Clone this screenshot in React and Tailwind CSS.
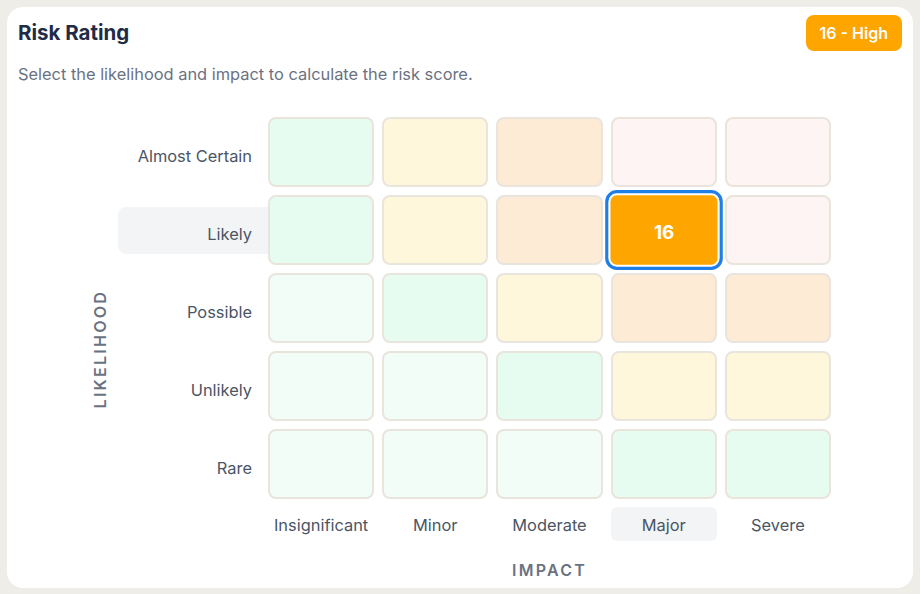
import React, { useState } from 'react';

const likelihoods = ['Almost Certain', 'Likely', 'Possible', 'Unlikely', 'Rare'];
const impacts = ['Insignificant', 'Minor', 'Moderate', 'Major', 'Severe'];

// tonos de la matriz, fila por fila (de arriba hacia abajo)
const tones = {
  mint: 'bg-[#f2fdf8]',
  green: 'bg-[#e6fcf0]',
  yellow: 'bg-[#fff7dc]',
  orange: 'bg-[#fdebd5]',
  pink: 'bg-[#fef4f3]',
};

const matrix = [
  ['green', 'yellow', 'orange', 'pink', 'pink'],
  ['green', 'yellow', 'orange', 'orange', 'pink'],
  ['mint', 'green', 'yellow', 'orange', 'orange'],
  ['mint', 'mint', 'green', 'yellow', 'yellow'],
  ['mint', 'mint', 'mint', 'green', 'green'],
];

const App = () => {
  const [selected, setSelected] = useState({ row: 1, col: 3 });

  const score = (5 - selected.row) * (selected.col + 1);

  return (
    <div className="min-h-screen bg-[#eeede8] p-[7px] font-['Inter','Noto_Sans',sans-serif]">
      <div className="bg-white rounded-2xl px-[11px] pt-2 pb-[6px]">
        <div className="flex items-center justify-between">
          <h2 className="text-[20.5px] font-bold text-[#1f2c48]">Risk Rating</h2>
          <span className="h-9 px-[14px] flex items-center rounded-lg bg-[#ffa500] text-white text-base font-semibold">
            {score} - High
          </span>
        </div>
        <p className="mt-[11px] text-[16.4px] leading-6 text-gray-500">
          Select the likelihood and impact to calculate the risk score.
        </p>

        <div className="mt-[31px] flex pl-[75px]">
          <div className="w-[14px] flex items-center justify-center">
            <span className="[writing-mode:vertical-rl] rotate-180 text-base font-semibold tracking-[0.14em] text-gray-500">
              LIKELIHOOD
            </span>
          </div>

          <div className="ml-[11px] flex flex-col">
            <div className="flex flex-col gap-2">
              {likelihoods.map((label, r) => (
                <div key={label} className="flex items-center">
                  <div
                    className={`w-[150px] h-[47px] flex items-center justify-end pr-4 pt-[8px] text-[16.4px] text-gray-600 rounded-l-lg ${
                      selected.row === r ? 'bg-gray-100' : ''
                    }`}
                  >
                    {label}
                  </div>
                  <div className="grid grid-cols-5 gap-2 w-[563px]">
                    {matrix[r].map((tone, c) => {
                      const isSel = selected.row === r && selected.col === c;
                      return (
                        <button
                          key={c}
                          type="button"
                          onClick={() => setSelected({ row: r, col: c })}
                          className={
                            isSel
                              ? 'relative z-10 h-[70px] pt-[6px] rounded-lg bg-[#ffa500] border-2 border-white ring-[3px] ring-[#1f7fe6] scale-105 text-white text-lg font-bold'
                              : `h-[70px] rounded-lg border-2 border-[#e9e4dc] ${tones[tone]}`
                          }
                        >
                          {isSel ? score : ''}
                        </button>
                      );
                    })}
                  </div>
                </div>
              ))}
            </div>

            <div className="mt-2 flex">
              <div className="w-[150px]" />
              <div className="grid grid-cols-5 gap-2 w-[563px]">
                {impacts.map((label, c) => (
                  <div
                    key={label}
                    className={`h-[34px] flex items-center justify-center pt-[2px] rounded-md text-[16.4px] text-gray-600 ${
                      selected.col === c ? 'bg-gray-100' : ''
                    }`}
                  >
                    {label}
                  </div>
                ))}
              </div>
            </div>

            <div className="mt-[17px] flex">
              <div className="w-[150px]" />
              <div className="w-[563px] text-center text-base leading-6 font-semibold tracking-[0.14em] text-gray-500">
                IMPACT
              </div>
            </div>
          </div>
        </div>
      </div>
    </div>
  );
};

export default App;
